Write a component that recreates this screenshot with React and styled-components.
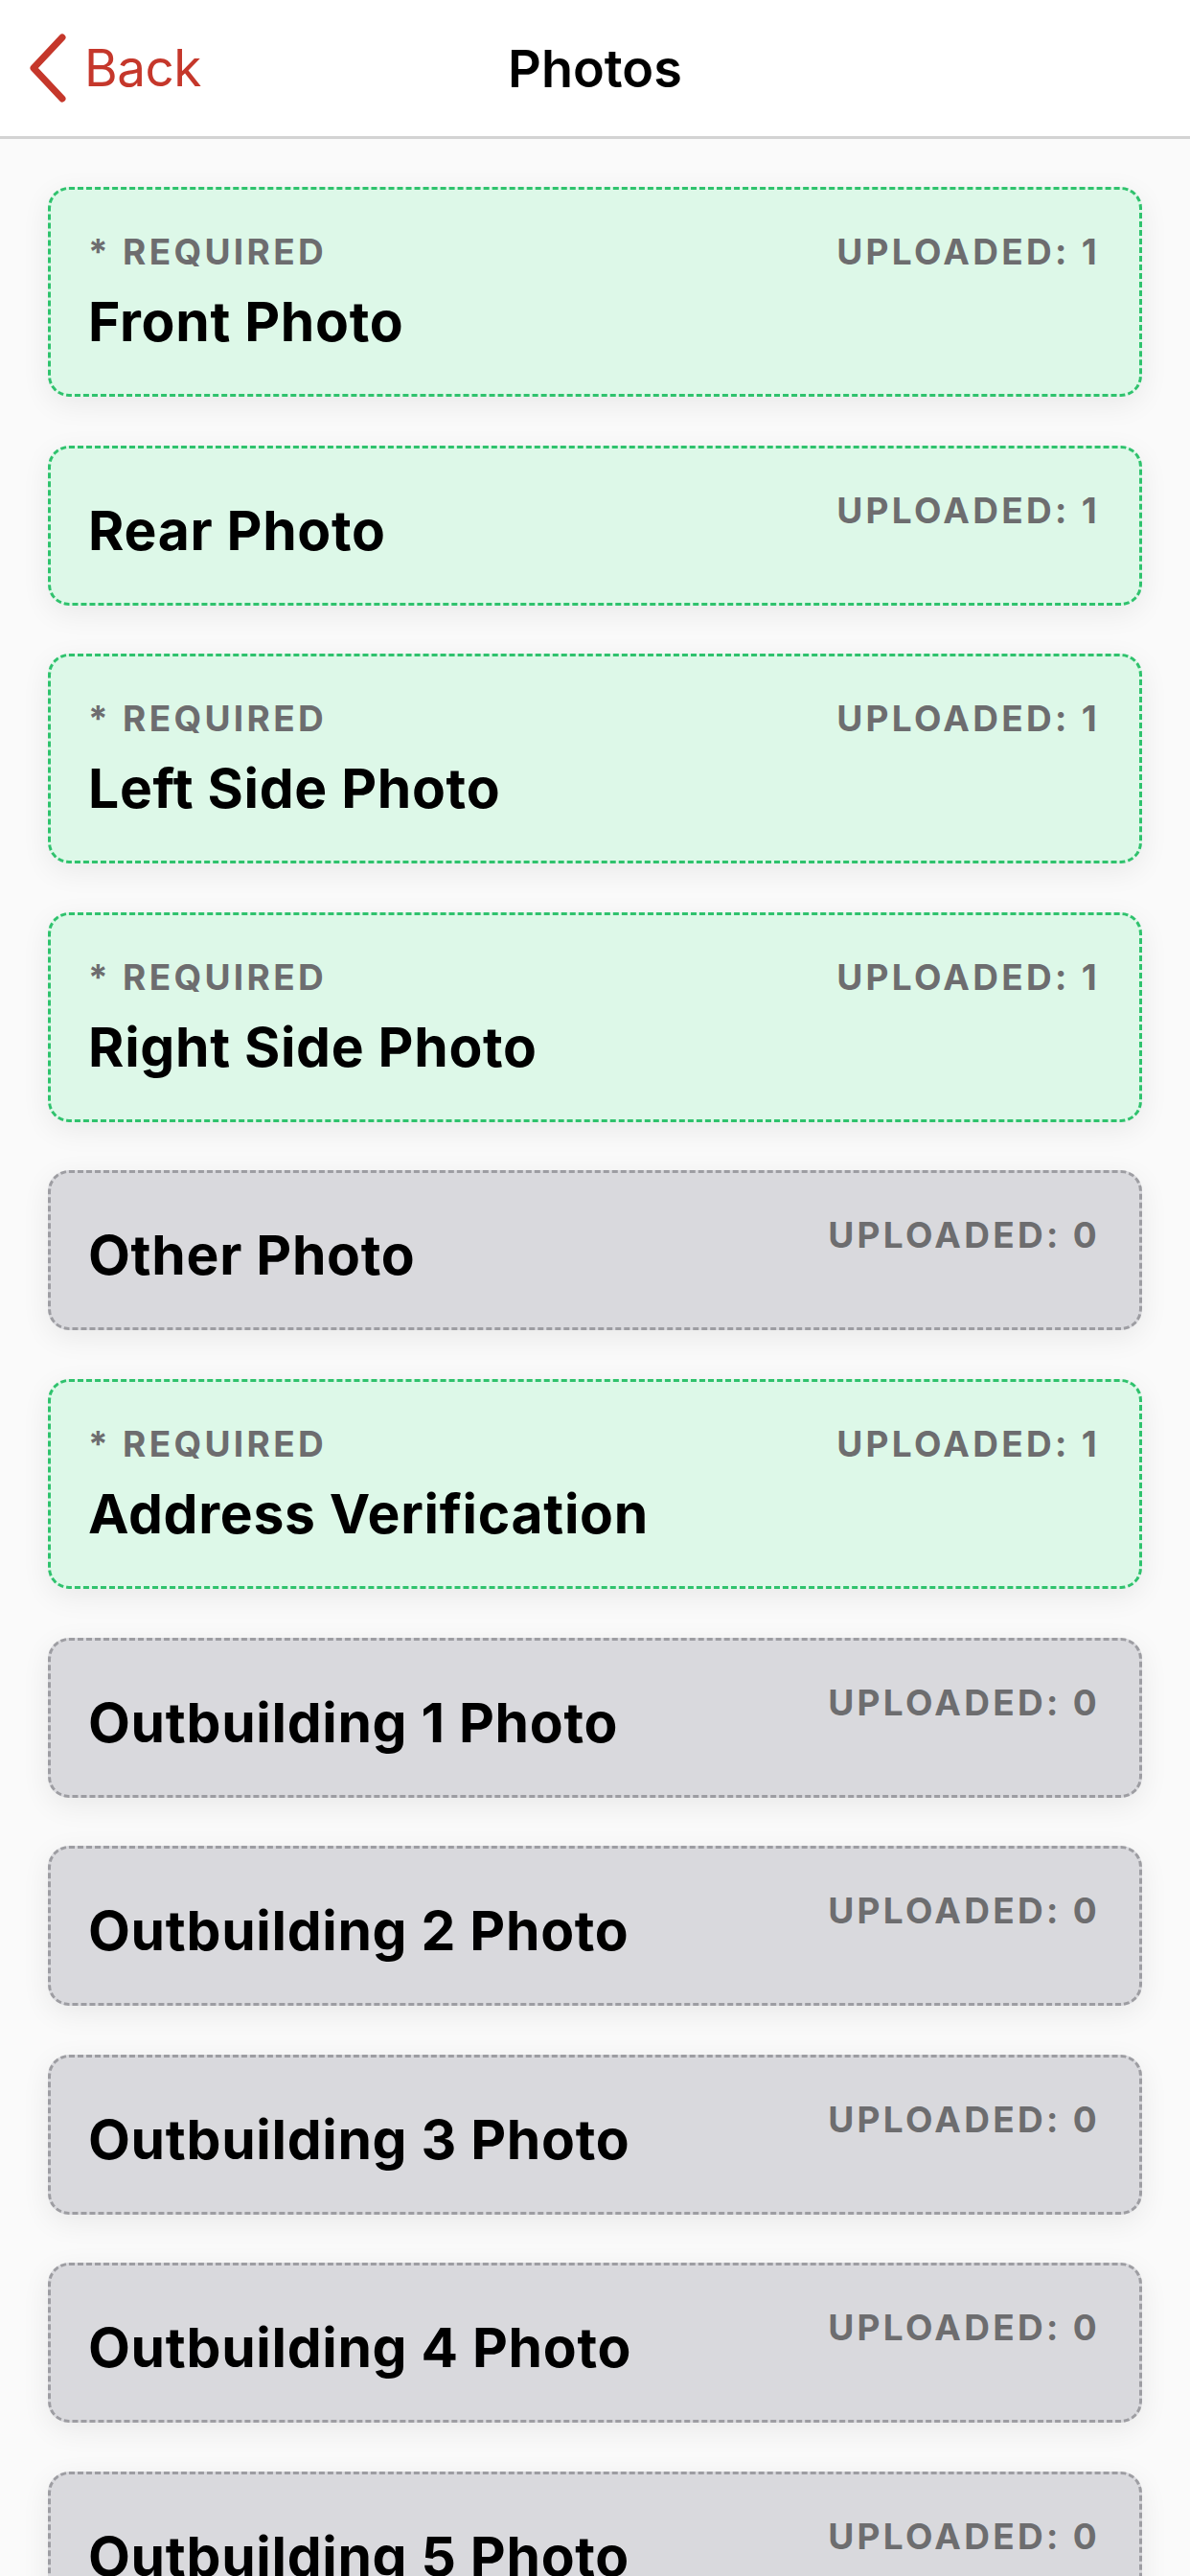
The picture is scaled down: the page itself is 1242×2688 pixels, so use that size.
import React from 'react';
import styled, { createGlobalStyle } from 'styled-components';

const GlobalStyle = createGlobalStyle`
  body {
    margin: 0;
    background-color: #fafafa;
    font-family: 'Inter', 'Liberation Sans', sans-serif;
  }
`;

const Header = styled.header`
  display: grid;
  grid-template-columns: 1fr auto 1fr;
  align-items: center;
  height: 142px;
  background-color: #ffffff;
  border-bottom: 3px solid #d3d3d3;
`;

const BackButton = styled.button`
  display: flex;
  align-items: center;
  gap: 19px;
  justify-self: start;
  padding: 0 0 0 31px;
  border: none;
  background: none;
  color: #c5372b;
  font-family: inherit;
  font-size: 53px;
  font-weight: 400;
  letter-spacing: -0.5px;
  cursor: pointer;
`;

const Title = styled.h1`
  margin: 0;
  color: #000000;
  font-size: 54px;
  font-weight: 600;
  letter-spacing: 0;
`;

const List = styled.main`
  display: flex;
  flex-direction: column;
  gap: 50.6px;
  padding: 50px 50px 60px;
`;

const Card = styled.div`
  display: flex;
  justify-content: space-between;
  align-items: flex-start;
  padding: 43px 41px 32px 39px;
  border-radius: 22px;
  border: 3px dashed ${props => props.$done ? '#2fc26d' : '#9d9da2'};
  background-color: ${props => props.$done ? '#ddf8e8' : '#d9d9dd'};
  box-shadow: 0 8px 30px rgba(0, 0, 0, 0.07);
`;

const Labels = styled.div`
  display: flex;
  flex-direction: column;
`;

const Caption = styled.span`
  font-size: 37px;
  font-weight: 700;
  line-height: 44px;
  letter-spacing: 3.3px;
  text-transform: uppercase;
  color: #6d6d6f;
`;

const Name = styled.span`
  margin-top: ${props => props.$offset ? '8px' : '0'};
  padding: 11px 0;
  font-size: 57px;
  font-weight: 700;
  line-height: 64px;
  letter-spacing: 0.7px;
  color: #000000;
`;

const Chevron = () =>
  <svg width="38" height="72" viewBox="0 0 38 72">
    <path d="M34 4 L4 36 L34 68" fill="none" stroke="#c5372b" strokeWidth="7"
      strokeLinecap="round" strokeLinejoin="round" />
  </svg>

const photos = [
  { name: 'Front Photo', required: true, uploaded: 1 },
  { name: 'Rear Photo', required: false, uploaded: 1 },
  { name: 'Left Side Photo', required: true, uploaded: 1 },
  { name: 'Right Side Photo', required: true, uploaded: 1 },
  { name: 'Other Photo', required: false, uploaded: 0 },
  { name: 'Address Verification', required: true, uploaded: 1 },
  { name: 'Outbuilding 1 Photo', required: false, uploaded: 0 },
  { name: 'Outbuilding 2 Photo', required: false, uploaded: 0 },
  { name: 'Outbuilding 3 Photo', required: false, uploaded: 0 },
  { name: 'Outbuilding 4 Photo', required: false, uploaded: 0 },
  { name: 'Outbuilding 5 Photo', required: false, uploaded: 0 },
];

export default function App() {
  return (
    <>
      <GlobalStyle />
      <Header>
        <BackButton>
          <Chevron />
          Back
        </BackButton>
        <Title>Photos</Title>
      </Header>
      <List>
        {photos.map(photo =>
          <Card key={photo.name} $done={photo.uploaded > 0}>
            <Labels>
              {photo.required && <Caption>* Required</Caption>}
              <Name $offset={photo.required}>{photo.name}</Name>
            </Labels>
            <Caption>Uploaded: {photo.uploaded}</Caption>
          </Card>
        )}
      </List>
    </>
  );
}
